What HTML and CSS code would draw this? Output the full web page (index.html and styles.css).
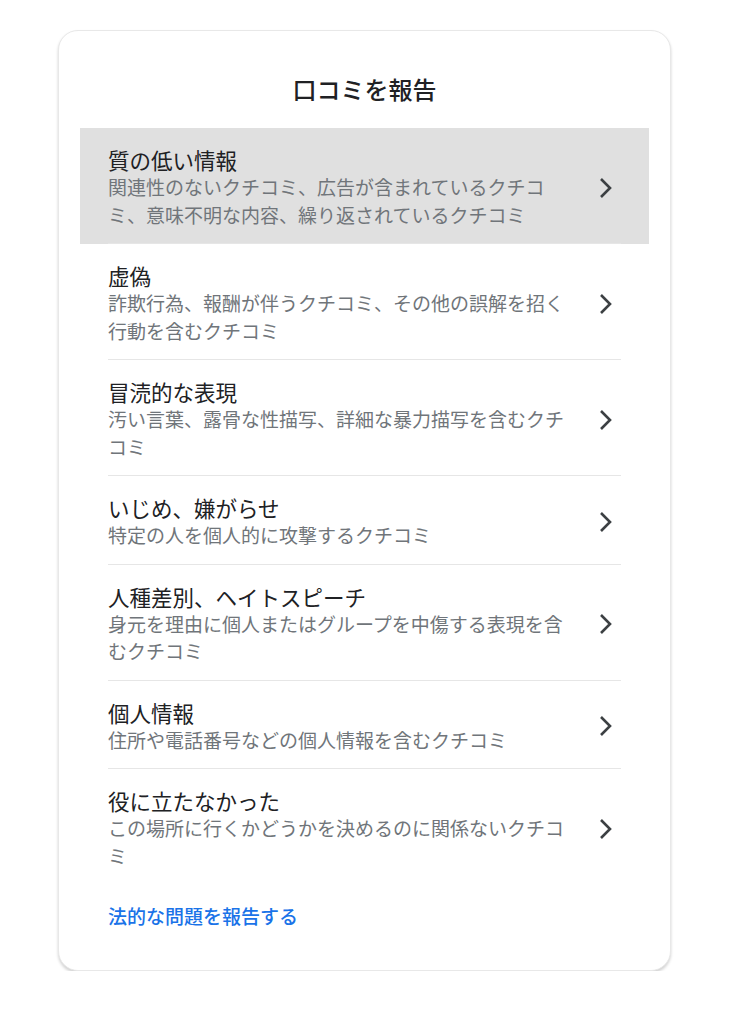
FILE: index.html
```html
<!DOCTYPE html>
<html lang="ja">
<head>
    <meta charset="UTF-8">
    <meta name="viewport" content="width=device-width, initial-scale=1.0">
    <title>口コミを報告</title>
    <link rel="stylesheet" href="styles.css">
</head>
<body>
    <div class="card">
        <h1 class="card-title">口コミを報告</h1>

        <ul class="report-list">
            <li class="report-row active">
                <div class="row-inner">
                    <div class="row-text">
                        <div class="row-title">質の低い情報</div>
                        <div class="row-desc">関連性のないクチコミ、広告が含まれているクチコミ、意味不明な内容、繰り返されているクチコミ</div>
                    </div>
                    <svg class="chev" viewBox="0 0 14 22"><polyline points="2,2 11,11 2,20"/></svg>
                </div>
            </li>
            <li class="report-row">
                <div class="row-inner">
                    <div class="row-text">
                        <div class="row-title">虚偽</div>
                        <div class="row-desc">詐欺行為、報酬が伴うクチコミ、その他の誤解を招く行動を含むクチコミ</div>
                    </div>
                    <svg class="chev" viewBox="0 0 14 22"><polyline points="2,2 11,11 2,20"/></svg>
                </div>
            </li>
            <li class="report-row">
                <div class="row-inner">
                    <div class="row-text">
                        <div class="row-title">冒涜的な表現</div>
                        <div class="row-desc">汚い言葉、露骨な性描写、詳細な暴力描写を含むクチコミ</div>
                    </div>
                    <svg class="chev" viewBox="0 0 14 22"><polyline points="2,2 11,11 2,20"/></svg>
                </div>
            </li>
            <li class="report-row">
                <div class="row-inner">
                    <div class="row-text">
                        <div class="row-title">いじめ、嫌がらせ</div>
                        <div class="row-desc">特定の人を個人的に攻撃するクチコミ</div>
                    </div>
                    <svg class="chev" viewBox="0 0 14 22"><polyline points="2,2 11,11 2,20"/></svg>
                </div>
            </li>
            <li class="report-row">
                <div class="row-inner">
                    <div class="row-text">
                        <div class="row-title">人種差別、ヘイトスピーチ</div>
                        <div class="row-desc">身元を理由に個人またはグループを中傷する表現を含むクチコミ</div>
                    </div>
                    <svg class="chev" viewBox="0 0 14 22"><polyline points="2,2 11,11 2,20"/></svg>
                </div>
            </li>
            <li class="report-row">
                <div class="row-inner">
                    <div class="row-text">
                        <div class="row-title">個人情報</div>
                        <div class="row-desc">住所や電話番号などの個人情報を含むクチコミ</div>
                    </div>
                    <svg class="chev" viewBox="0 0 14 22"><polyline points="2,2 11,11 2,20"/></svg>
                </div>
            </li>
            <li class="report-row last">
                <div class="row-inner">
                    <div class="row-text">
                        <div class="row-title">役に立たなかった</div>
                        <div class="row-desc">この場所に行くかどうかを決めるのに関係ないクチコミ</div>
                    </div>
                    <svg class="chev" viewBox="0 0 14 22"><polyline points="2,2 11,11 2,20"/></svg>
                </div>
            </li>
        </ul>

        <a class="legal-link" href="#">法的な問題を報告する</a>
    </div>
</body>
</html>
```

FILE: styles.css
```css
body {
    margin: 0;
    background: #ffffff;
    font-family: "Noto Sans CJK JP", "Noto Sans", Roboto, sans-serif;
    color: #202124;
}

.card {
    width: 613px;
    margin: 30px 0 0 58px;
    padding: 42px 21px 41px;
    box-sizing: border-box;
    background: #fff;
    border: 1px solid #e8e8e8;
    border-radius: 20px;
    box-shadow: 0 2px 3px rgba(0, 0, 0, 0.18);
}

.card-title {
    margin: 0 0 23px;
    font-size: 24px;
    line-height: 32px;
    font-weight: 500;
    text-align: center;
    color: #202124;
}

.report-list {
    list-style: none;
    margin: 0;
    padding: 0;
}

.report-row {
    padding: 0 28px;
    cursor: pointer;
}

/* hovered row */
.report-row.active {
    background-color: #e0e0e0;
}

.row-inner {
    display: flex;
    align-items: center;
    padding: 19px 0 15px;
    border-bottom: 1px solid #e6e6e6;
}

.report-row.last .row-inner {
    border-bottom: none;
}

.row-text {
    width: 466px;
}

.row-title {
    font-size: 21.5px;
    line-height: 26px;
    color: #202124;
}

.row-desc {
    font-size: 19px;
    line-height: 27.5px;
    color: #70757a;
}

.chev {
    width: 14px;
    height: 22px;
    margin-left: auto;
    margin-right: 8px;
    fill: none;
    stroke: #3c4043;
    stroke-width: 2.6;
}

.legal-link {
    display: block;
    margin: 19px 0 0 28px;
    font-size: 19px;
    line-height: 26px;
    font-weight: 500;
    color: #1a73e8;
    text-decoration: none;
}
```
